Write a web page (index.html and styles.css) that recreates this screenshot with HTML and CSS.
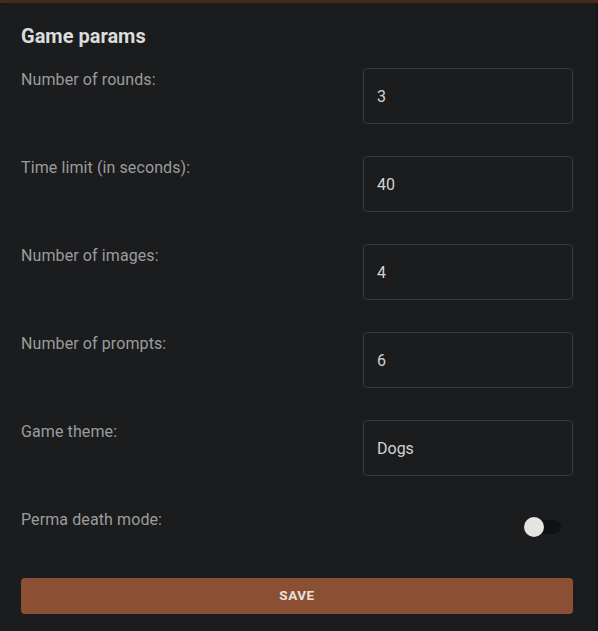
FILE: index.html
```html
<!DOCTYPE html>
<html>
<head>
<meta charset="utf-8">
<link rel="stylesheet" href="styles.css">
</head>
<body>
<div class="topbar"></div>
<div class="card">
  <h2 class="title">Game params</h2>
  <div class="rows">
    <div class="row">
      <label class="label">Number of rounds:</label>
      <div class="field">3</div>
    </div>
    <div class="row">
      <label class="label">Time limit (in seconds):</label>
      <div class="field">40</div>
    </div>
    <div class="row">
      <label class="label">Number of images:</label>
      <div class="field">4</div>
    </div>
    <div class="row">
      <label class="label">Number of prompts:</label>
      <div class="field">6</div>
    </div>
    <div class="row">
      <label class="label">Game theme:</label>
      <div class="field">Dogs</div>
    </div>
    <div class="row row-toggle">
      <label class="label">Perma death mode:</label>
      <div class="toggle"><span class="track"></span><span class="thumb"></span></div>
    </div>
  </div>
  <button class="save">SAVE</button>
</div>
</body>
</html>
```
FILE: styles.css
```css
html, body {
  margin: 0;
  padding: 0;
  background: #161719;
  font-family: Roboto, "Noto Sans", sans-serif;
}
.topbar {
  height: 3px;
  background: #4a2a1b;
}
.card {
  background: #1b1c1e;
  border-radius: 4px 4px 0 0;
  width: 596px;
  box-sizing: border-box;
  padding: 21px 23px 17px 21px;
  min-height: 628px;
}
.title {
  margin: 0;
  font-size: 20px;
  line-height: 24px;
  font-weight: 700;
  color: #dcdcdc;
}
.rows {
  display: flex;
  flex-direction: column;
  gap: 32px;
  margin-top: 20px;
}
.row {
  display: flex;
  justify-content: space-between;
  align-items: flex-start;
}
.label {
  font-size: 16px;
  line-height: 24px;
  color: #9c9c9c;
  letter-spacing: 0.1px;
}
.field {
  width: 210px;
  height: 56px;
  box-sizing: border-box;
  border: 1px solid #3a3b3c;
  border-radius: 4px;
  padding: 0 13px;
  display: flex;
  align-items: center;
  font-size: 16px;
  color: #d2d2d2;
}
.row-toggle {
  height: 38px;
}
.toggle {
  position: relative;
  width: 37px;
  height: 38px;
  margin-right: 12px;
}
.track {
  position: absolute;
  left: 2px;
  right: 0;
  top: 12px;
  height: 14px;
  border-radius: 7px;
  background: #101113;
}
.thumb {
  position: absolute;
  left: 0;
  top: 9px;
  width: 20px;
  height: 20px;
  border-radius: 50%;
  background: #e6e4e1;
}
.save {
  display: block;
  width: 100%;
  height: 36px;
  margin-top: 32px;
  padding: 0 0 2px 0;
  border: none;
  border-radius: 4px;
  background: #8b5033;
  color: #e8e2dc;
  font-family: Roboto, "Noto Sans", sans-serif;
  font-size: 13.5px;
  font-weight: 700;
  letter-spacing: 0.5px;
}
```
